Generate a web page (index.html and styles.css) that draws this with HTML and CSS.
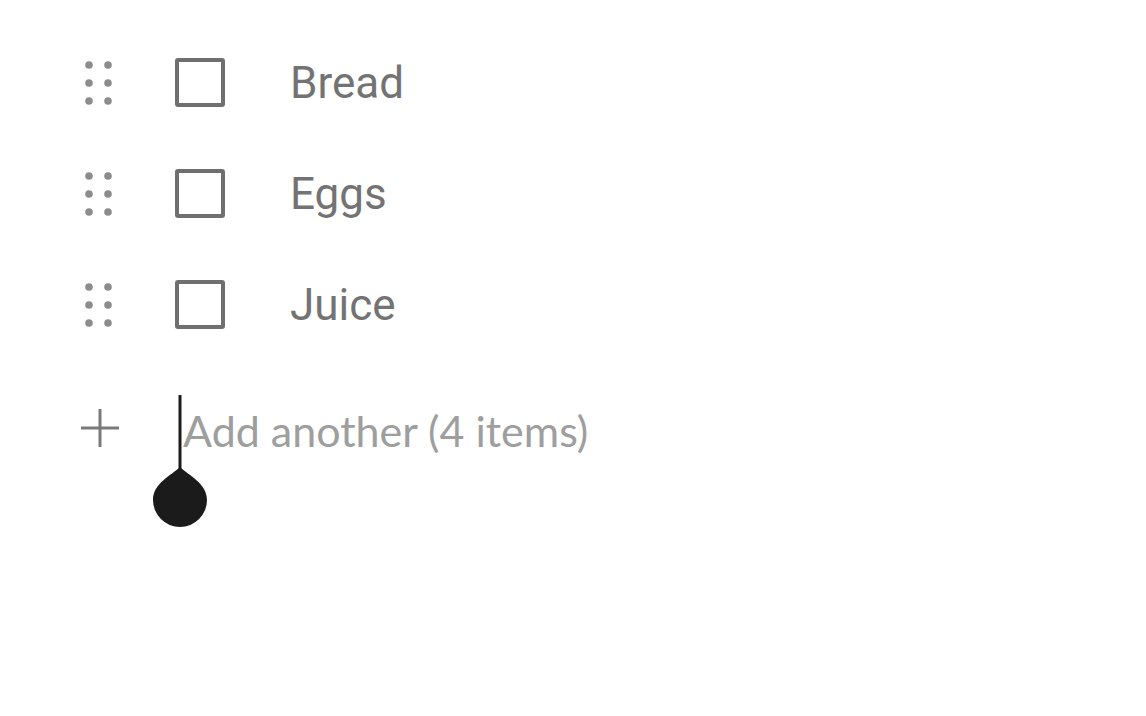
FILE: index.html
```html
<!DOCTYPE html>
<html>
<head>
<meta charset="utf-8">
<link rel="stylesheet" href="styles.css">
</head>
<body>
<div class="list">
  <div class="row">
    <svg class="handle" width="40" height="44" viewBox="0 0 40 44"><g fill="#8c8c8c"><circle cx="9" cy="4" r="3.8"/><circle cx="28" cy="4" r="3.8"/><circle cx="9" cy="22" r="3.8"/><circle cx="28" cy="22" r="3.8"/><circle cx="9" cy="40" r="3.8"/><circle cx="28" cy="40" r="3.8"/></g></svg>
    <span class="box"></span>
  </div>
  <div class="row">
    <svg class="handle" width="40" height="44" viewBox="0 0 40 44"><g fill="#8c8c8c"><circle cx="9" cy="4" r="3.8"/><circle cx="28" cy="4" r="3.8"/><circle cx="9" cy="22" r="3.8"/><circle cx="28" cy="22" r="3.8"/><circle cx="9" cy="40" r="3.8"/><circle cx="28" cy="40" r="3.8"/></g></svg>
    <span class="box"></span>
    <span class="label">Bread</span>
  </div>
  <div class="row">
    <svg class="handle" width="40" height="44" viewBox="0 0 40 44"><g fill="#8c8c8c"><circle cx="9" cy="4" r="3.8"/><circle cx="28" cy="4" r="3.8"/><circle cx="9" cy="22" r="3.8"/><circle cx="28" cy="22" r="3.8"/><circle cx="9" cy="40" r="3.8"/><circle cx="28" cy="40" r="3.8"/></g></svg>
    <span class="box"></span>
    <span class="label">Eggs</span>
  </div>
  <div class="row">
    <svg class="handle" width="40" height="44" viewBox="0 0 40 44"><g fill="#8c8c8c"><circle cx="9" cy="4" r="3.8"/><circle cx="28" cy="4" r="3.8"/><circle cx="9" cy="22" r="3.8"/><circle cx="28" cy="22" r="3.8"/><circle cx="9" cy="40" r="3.8"/><circle cx="28" cy="40" r="3.8"/></g></svg>
    <span class="box"></span>
    <span class="label">Juice</span>
  </div>
  <div class="add-row">
    <svg class="plus" width="40" height="40" viewBox="0 0 40 40"><path d="M20 1V39M1 20H39" stroke="#7a7a7a" stroke-width="3" fill="none"/></svg>
    <span class="add-text">Add another (4 items)</span>
    <svg class="cursor" width="60" height="135" viewBox="0 0 60 135">
      <rect x="28.5" y="0" width="3" height="78" fill="#1b1b1b"/>
      <path d="M30 72 C38 80 57 88 57 105 A27 27 0 1 1 3 105 C3 88 22 80 30 72 Z" fill="#1b1b1b"/>
    </svg>
  </div>
</div>
</body>
</html>
```

FILE: styles.css
```css
html, body {
  margin: 0;
  padding: 0;
  background: #ffffff;
  overflow: hidden;
}
body {
  width: 1146px;
  height: 716px;
  font-family: Roboto, "Liberation Sans", sans-serif;
}
.list {
  margin-top: -81px;
  display: flex;
  flex-direction: column;
}
.row {
  height: 111px;
  display: flex;
  align-items: center;
  padding-left: 80px;
}
.row:first-child {
  height: 108px;
}
.handle {
  flex: none;
  display: block;
}
.box {
  flex: none;
  box-sizing: border-box;
  width: 50px;
  height: 49px;
  border: 4px solid #6f6f6f;
  border-radius: 3px;
  margin-left: 55px;
}
.label {
  margin-left: 65px;
  font-size: 44px;
  color: #737373;
  line-height: 1;
}
.add-row {
  position: relative;
  height: 140px;
  display: flex;
  align-items: center;
  padding-left: 80px;
}
.plus {
  flex: none;
  display: block;
  margin-top: -4px;
}
.add-text {
  margin-left: 63px;
  font-family: Lato, "Liberation Sans", sans-serif;
  font-size: 43px;
  color: #9e9e9e;
  line-height: 1;
}
.cursor {
  position: absolute;
  left: 150px;
  top: 35px;
}
```
